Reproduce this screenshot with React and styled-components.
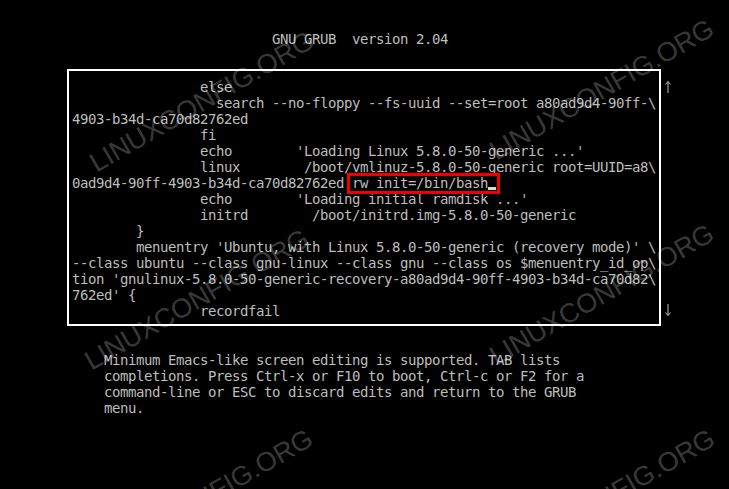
import React from "react";
import styled, { createGlobalStyle } from "styled-components";

const GlobalStyle = createGlobalStyle`
  html, body {
    margin: 0;
    padding: 0;
    background: #000;
  }
  body {
    font-family: "DejaVu Sans Mono", "Liberation Mono", monospace;
  }
`;

const Screen = styled.div`
  position: relative;
  width: 729px;
  height: 489px;
  overflow: hidden;
  background: #000;
  padding-top: 31px;
  box-sizing: border-box;
  color: #bdbdbd;
  font-family: "DejaVu Sans Mono", "Liberation Mono", monospace;
  font-size: 14px;
  letter-spacing: -0.428px;
  line-height: 16px;
`;

const Header = styled.div`
  padding-left: 272px;
  height: 16px;
  white-space: pre;
`;

const EditorRow = styled.div`
  display: flex;
  align-items: stretch;
  margin-top: 22px;
  margin-left: 67px;
`;

const EditorBox = styled.div`
  width: 584px;
  border: 2px solid #ffffff;
  padding: 8px 3px 5px 3px;
`;

const Line = styled.div`
  height: 16px;
  white-space: pre;
`;

const ScrollCol = styled.div`
  display: flex;
  flex-direction: column;
  justify-content: space-between;
  width: 8px;
  margin-left: 3px;
  padding: 10px 0 7px 0;
`;

const ArrowIcon = styled.svg`
  display: block;
  width: 8px;
  height: 16px;
`;

const Marked = styled.span`
  position: relative;
  &::after {
    content: "";
    position: absolute;
    left: -5px;
    right: -4px;
    top: -2px;
    bottom: -3px;
    border: 3px solid #f00000;
    pointer-events: none;
  }
`;

const Cursor = styled.span`
  display: inline-block;
  width: 8px;
  height: 3px;
  background: #d8d8d8;
  vertical-align: -2px;
`;

const HelpText = styled.div`
  margin-top: 26px;
  padding-left: 104px;
`;

const Watermark = styled.div`
  position: absolute;
  left: ${(p) => p.$x}px;
  top: ${(p) => p.$y}px;
  transform: translate(-50%, -50%) rotate(-30deg);
  font-family: "Liberation Sans", Arial, sans-serif;
  font-size: 27px;
  letter-spacing: 0;
  line-height: 1;
  white-space: nowrap;
  color: rgba(255, 255, 255, 0.24);
  pointer-events: none;
`;

function Arrow({ up }) {
  return (
    <ArrowIcon viewBox="0 0 8 16" aria-hidden="true">
      {up ? (
        <g stroke="#bdbdbd" strokeWidth="1" fill="none">
          <line x1="4" y1="2.5" x2="4" y2="14" />
          <polyline points="1.5,5.5 4,2.5 6.5,5.5" />
        </g>
      ) : (
        <g stroke="#bdbdbd" strokeWidth="1" fill="none">
          <line x1="4" y1="1" x2="4" y2="12.5" />
          <polyline points="1.5,9.5 4,12.5 6.5,9.5" />
        </g>
      )}
    </ArrowIcon>
  );
}

const sp = (n) => " ".repeat(n);

const lines = [
  sp(16) + "else",
  sp(18) + "search --no-floppy --fs-uuid --set=root a80ad9d4-90ff-\\",
  "4903-b34d-ca70d82762ed",
  sp(16) + "fi",
  sp(16) + "echo" + sp(8) + "'Loading Linux 5.8.0-50-generic ...'",
  sp(16) + "linux" + sp(8) + "/boot/vmlinuz-5.8.0-50-generic root=UUID=a8\\",
  null,
  sp(16) + "echo" + sp(8) + "'Loading initial ramdisk ...'",
  sp(16) + "initrd" + sp(8) + "/boot/initrd.img-5.8.0-50-generic",
  sp(8) + "}",
  sp(8) + "menuentry 'Ubuntu, with Linux 5.8.0-50-generic (recovery mode)' \\",
  "--class ubuntu --class gnu-linux --class gnu --class os $menuentry_id_op\\",
  "tion 'gnulinux-5.8.0-50-generic-recovery-a80ad9d4-90ff-4903-b34d-ca70d82\\",
  "762ed' {",
  sp(16) + "recordfail",
];

const help = [
  "Minimum Emacs-like screen editing is supported. TAB lists",
  "completions. Press Ctrl-x or F10 to boot, Ctrl-c or F2 for a",
  "command-line or ESC to discard edits and return to the GRUB",
  "menu.",
];

const marks = [
  { x: 202, y: 102 },
  { x: 602, y: 90 },
  { x: 197, y: 300 },
  { x: 602, y: 295 },
  { x: 201, y: 500 },
  { x: 603, y: 500 },
];

export default function App() {
  return (
    <>
      <GlobalStyle />
      <Screen>
        <Header>GNU GRUB  version 2.04</Header>
        <EditorRow>
          <EditorBox>
            {lines.map((l, i) =>
              l === null ? (
                <Line key={i}>
                  {"0ad9d4-90ff-4903-b34d-ca70d82762ed "}
                  <Marked>
                    rw init=/bin/bash
                    <Cursor />
                  </Marked>
                </Line>
              ) : (
                <Line key={i}>{l}</Line>
              )
            )}
          </EditorBox>
          <ScrollCol>
            <Arrow up />
            <Arrow />
          </ScrollCol>
        </EditorRow>
        <HelpText>
          {help.map((h, i) => (
            <Line key={i}>{h}</Line>
          ))}
        </HelpText>
        {marks.map((m, i) => (
          <Watermark key={i} $x={m.x} $y={m.y}>
            LINUXCONFIG.ORG
          </Watermark>
        ))}
      </Screen>
    </>
  );
}
